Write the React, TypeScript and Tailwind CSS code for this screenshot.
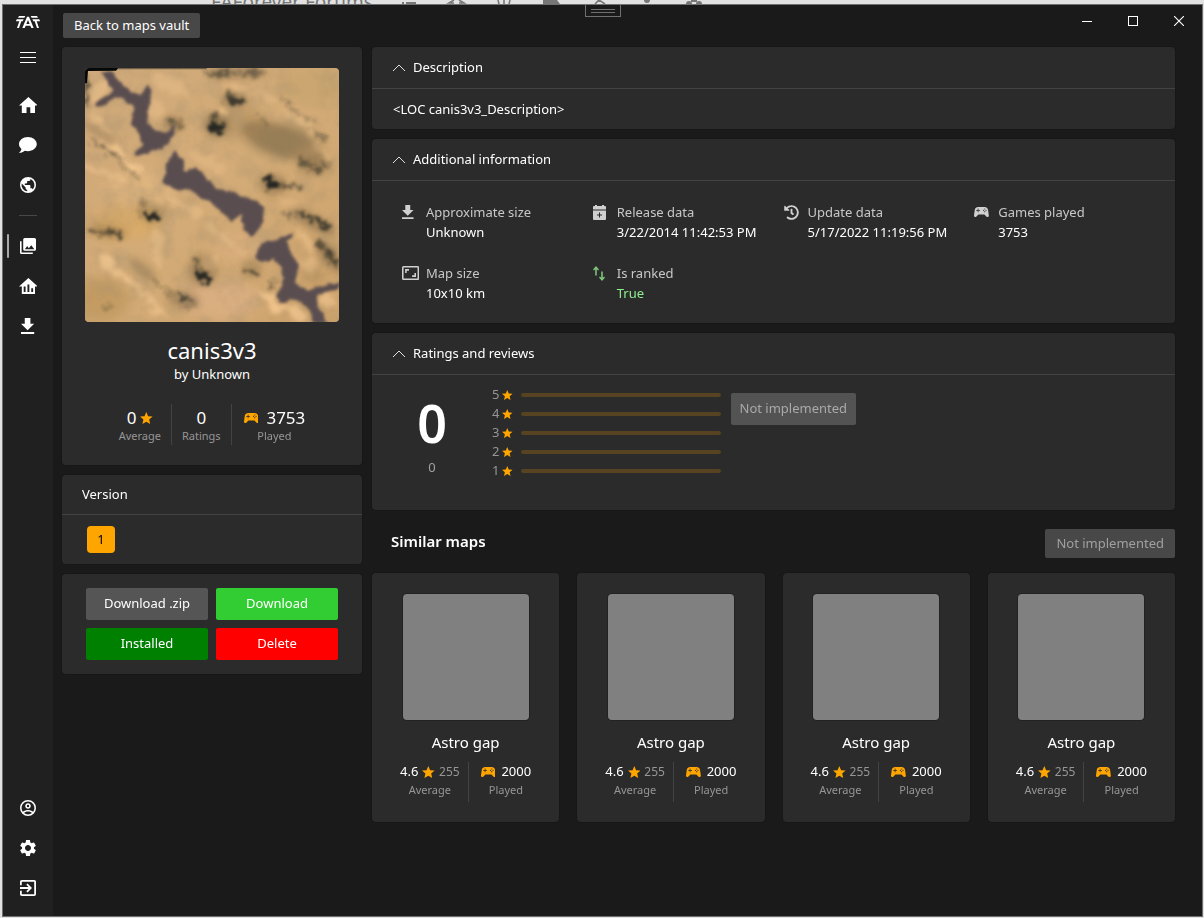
import { useState } from "react";
import type { ReactNode } from "react";
import { FaHistory } from "react-icons/fa";
import { MdSettings } from "react-icons/md";

const ICONS = {
	home: {
		box: "2 3 20 17",
		d: "M10,20V14H14V20H19V12H22L12,3L2,12H5V20H10Z",
	},
	chat: {
		box: "2 3 20 18",
		d: "M12,3C17.5,3 22,6.58 22,11C22,15.42 17.5,19 12,19C10.76,19 9.57,18.82 8.47,18.5C5.55,21 2,21 2,21C4.33,18.67 4.7,17.1 4.75,16.5C3.05,15.07 2,13.13 2,11C2,6.58 6.5,3 12,3Z",
	},
	earth: {
		box: "2 2 20 20",
		d: "M17.9,17.39C17.64,16.59 16.89,16 16,16H15V13A1,1 0 0,0 14,12H8V10H10A1,1 0 0,0 11,9V7H13A2,2 0 0,0 15,5V4.59C17.93,5.77 20,8.64 20,12C20,14.08 19.2,15.97 17.9,17.39M11,19.93C7.05,19.44 4,16.08 4,12C4,11.38 4.08,10.78 4.21,10.21L9,15V16A2,2 0 0,0 11,18M12,2A10,10 0 0,0 2,12A10,10 0 0,0 12,22A10,10 0 0,0 22,12A10,10 0 0,0 12,2Z",
	},
	images: {
		box: "2 2 20 20",
		d: "M22,16V4A2,2 0 0,0 20,2H8A2,2 0 0,0 6,4V16A2,2 0 0,0 8,18H20A2,2 0 0,0 22,16M11,12L13.03,14.71L16,11L20,16H8M2,6V20A2,2 0 0,0 4,22H18V20H4V6",
	},
	analytics: {
		box: "2 3 20 17",
		d: "M12,3L2,12H5V20H19V12H22L12,3M9,18H7V12H9V18M13,18H11V10H13V18M17,18H15V14H17V18Z",
	},
	download: {
		box: "5 3 14 17",
		d: "M5,20H19V18H5M19,9H15V3H9V9H5L12,16L19,9Z",
	},
	account: {
		box: "2 2 20 20",
		d: "M12,2A10,10 0 0,0 2,12A10,10 0 0,0 12,22A10,10 0 0,0 22,12A10,10 0 0,0 12,2M7.07,18.28C7.5,17.38 10.12,16.5 12,16.5C13.88,16.5 16.5,17.38 16.93,18.28C15.57,19.36 13.86,20 12,20C10.14,20 8.43,19.36 7.07,18.28M18.36,16.83C16.93,15.09 13.46,14.5 12,14.5C10.54,14.5 7.07,15.09 5.64,16.83C4.62,15.5 4,13.82 4,12C4,7.59 7.59,4 12,4C16.41,4 20,7.59 20,12C20,13.82 19.38,15.5 18.36,16.83M12,6C10.06,6 8.5,7.56 8.5,9.5C8.5,11.44 10.06,13 12,13C13.94,13 15.5,11.44 15.5,9.5C15.5,7.56 13.94,6 12,6M12,11A1.5,1.5 0 0,1 10.5,9.5A1.5,1.5 0 0,1 12,8A1.5,1.5 0 0,1 13.5,9.5A1.5,1.5 0 0,1 12,11Z",
	},
	exit: {
		box: "3 3 18 18",
		d: "M19,3H5C3.89,3 3,3.89 3,5V9H5V5H19V19H5V15H3V19A2,2 0 0,0 5,21H19A2,2 0 0,0 21,19V5C21,3.89 20.1,3 19,3M10.08,15.58L11.5,17L16.5,12L11.5,7L10.08,8.41L12.67,11H3V13H12.67L10.08,15.58Z",
	},
	star: {
		box: "2 2 20 19",
		d: "M12,17.27L18.18,21L16.54,13.97L22,9.24L14.81,8.62L12,2L9.19,8.62L2,9.24L7.45,13.97L5.82,21L12,17.27Z",
	},
	controller: {
		box: "2 6 20 13.5",
		d: "M7.97,16L5,19C4.67,19.3 4.23,19.5 3.75,19.5A1.75,1.75 0 0,1 2,17.75V17.5L3,10.12C3.21,7.81 5.14,6 7.5,6H16.5C18.86,6 20.79,7.81 21,10.12L22,17.5V17.75A1.75,1.75 0 0,1 20.25,19.5C19.77,19.5 19.33,19.3 19,19L16.03,16H7.97M7,8V10H5V11H7V13H8V11H10V10H8V8H7M16.5,8A0.75,0.75 0 0,0 15.75,8.75A0.75,0.75 0 0,0 16.5,9.5A0.75,0.75 0 0,0 17.25,8.75A0.75,0.75 0 0,0 16.5,8M14.75,9.75A0.75,0.75 0 0,0 14,10.5A0.75,0.75 0 0,0 14.75,11.25A0.75,0.75 0 0,0 15.5,10.5A0.75,0.75 0 0,0 14.75,9.75M18.25,9.75A0.75,0.75 0 0,0 17.5,10.5A0.75,0.75 0 0,0 18.25,11.25A0.75,0.75 0 0,0 19,10.5A0.75,0.75 0 0,0 18.25,9.75M16.5,11.5A0.75,0.75 0 0,0 15.75,12.25A0.75,0.75 0 0,0 16.5,13A0.75,0.75 0 0,0 17.25,12.25A0.75,0.75 0 0,0 16.5,11.5Z",
	},
	calendar: {
		box: "0 0 13 15",
		d: "M2,0H4V1H9V0H11V1H12A1,1 0 0,1 13,2V4.5H0V2A1,1 0 0,1 1,1H2ZM0,5.5H13V14A1,1 0 0,1 12,15H1A1,1 0 0,1 0,14ZM6,7.5V9.5H4V10.5H6V12.5H7V10.5H9V9.5H7V7.5Z",
	},
	aspect: {
		box: "1 3 22 18",
		d: "M19,12H17V15H14V17H19V12M7,9H10V7H5V12H7V9M21,3H3A2,2 0 0,0 1,5V19A2,2 0 0,0 3,21H21A2,2 0 0,0 23,19V5A2,2 0 0,0 21,3M21,19H3V5H21V19Z",
	},
	ranked: {
		box: "0 0 12 15",
		d: "M3,0L6,3.5L5,4.5L3.8,3.2V9.5H2.2V3.2L1,4.5L0,3.5ZM9,15L6,11.5L7,10.5L8.2,11.8V5.5H9.8V11.8L11,10.5L12,11.5Z",
	},
};

type IconName = keyof typeof ICONS;

function Icon({ name, className }: { name: IconName; className: string }) {
	return (
		<svg
			viewBox={ICONS[name].box}
			fill="currentColor"
			fillRule="evenodd"
			className={`shrink-0 ${className}`}
			aria-hidden="true"
		>
			<path d={ICONS[name].d} />
		</svg>
	);
}

function Logo() {
	return (
		<svg viewBox="0 0 72 36" className="h-3 w-6" fill="#fff" aria-hidden="true">
			<path d="M9 0H28L25 5H6Z M2 10H23L20 16H16L9 36H3L10 16H0Z" />
			<path d="M63 0H44L47 5H66Z M70 10H49L52 16H56L63 36H69L62 16H72Z" />
			<path d="M33 2H39L53 36H46L43 29H29L26 36H19ZM36 12L31 24H41Z" />
		</svg>
	);
}

function NavButton({
	icon,
	label,
	active = false,
}: {
	icon: IconName | "settings";
	label: string;
	active?: boolean;
}) {
	return (
		<button
			type="button"
			aria-label={label}
			className="relative flex h-10 w-full items-center justify-center text-white hover:bg-white/5"
		>
			{active && (
				<span className="absolute left-1 h-6 w-0.5 rounded bg-[#a8a8a8]" />
			)}
			{icon === "settings" ? (
				<MdSettings className="size-5" />
			) : (
				<Icon name={icon} className="h-4 w-auto" />
			)}
		</button>
	);
}

function Sidebar() {
	return (
		<nav className="flex w-[50px] shrink-0 flex-col bg-[#202020] pb-2">
			<div className="flex h-8 items-center justify-center pt-0.5">
				<Logo />
			</div>
			<button
				type="button"
				aria-label="Menu"
				className="mb-2 flex h-10 flex-col items-center justify-center gap-1"
			>
				<span className="h-px w-4 bg-white" />
				<span className="h-px w-4 bg-white" />
				<span className="h-px w-4 bg-white" />
			</button>
			<NavButton icon="home" label="Home" />
			<NavButton icon="chat" label="Chat" />
			<NavButton icon="earth" label="World" />
			<div className="mx-4 my-2.5 h-px bg-[#484848]" />
			<NavButton icon="images" label="Maps" active />
			<NavButton icon="analytics" label="Statistics" />
			<NavButton icon="download" label="Downloads" />
			<div className="flex-1" />
			<NavButton icon="account" label="Account" />
			<NavButton icon="settings" label="Settings" />
			<NavButton icon="exit" label="Exit" />
		</nav>
	);
}

function TitleBar() {
	return (
		<header className="flex h-[42px] items-start justify-between pl-2.5">
			<button
				type="button"
				className="mt-2 h-[25px] rounded-xs bg-[#484848] px-[11px] text-[13px] text-white"
			>
				Back to maps vault
			</button>
			<div className="flex text-white">
				<button
					type="button"
					aria-label="Minimize"
					className="flex h-8 w-[46px] items-center justify-center"
				>
					<span className="h-px w-2.5 bg-white" />
				</button>
				<button
					type="button"
					aria-label="Maximize"
					className="flex h-8 w-[46px] items-center justify-center"
				>
					<span className="size-2.5 border border-white" />
				</button>
				<button
					type="button"
					aria-label="Close"
					className="flex h-8 w-[46px] items-center justify-center"
				>
					<svg viewBox="0 0 10 10" className="size-2.5" aria-hidden="true">
						<path d="M0 0L10 10M10 0L0 10" stroke="#fff" strokeWidth="1.1" />
					</svg>
				</button>
			</div>
		</header>
	);
}

function Card({
	children,
	className = "",
}: {
	children: ReactNode;
	className?: string;
}) {
	return (
		<div
			className={`rounded bg-[#2b2b2b] shadow-[0_0_0_1px_#171717] ${className}`}
		>
			{children}
		</div>
	);
}

function Expander({ title, children }: { title: string; children: ReactNode }) {
	const [open, setOpen] = useState(true);

	return (
		<Card>
			<button
				type="button"
				aria-expanded={open}
				onClick={() => setOpen(!open)}
				className="flex h-[42px] w-full items-center gap-[7px] border-b border-[#434343] px-5 text-[13px] text-white"
			>
				<svg viewBox="0 0 14 8" className="h-2 w-3.5" aria-hidden="true">
					<path
						d={open ? "M1 7L7 1L13 7" : "M1 1L7 7L13 1"}
						fill="none"
						stroke="#e0e0e0"
					/>
				</svg>
				{title}
			</button>
			{open && children}
		</Card>
	);
}

// Shadowed side of each crater and rock: x, y, rx, ry, rotation, opacity
const SHADOWS = [
	[462, 122, 28, 12, 10, 0.8],
	[445, 105, 12, 8, -30, 0.5],
	[410, 203, 27, 18, 10, 1],
	[400, 168, 10, 10, 0, 0.6],
	[572, 368, 18, 26, -30, 1],
	[632, 380, 40, 6, 0, 0.55],
	[212, 468, 30, 12, 15, 1],
	[188, 430, 8, 18, 0, 0.3],
	[368, 650, 28, 14, 38, 1],
	[350, 612, 9, 20, 10, 0.5],
	[515, 635, 24, 9, 30, 0.6],
	[572, 664, 13, 5, 0, 0.5],
	[575, 680, 10, 5, 0, 0.45],
	[60, 518, 32, 6, 0, 0.6],
	[105, 520, 24, 8, 30, 0.7],
	[670, 310, 14, 14, 10, 0.5],
	[705, 325, 24, 8, 10, 0.6],
	[738, 318, 14, 8, 0, 0.5],
	[676, 468, 30, 7, 20, 0.8],
	[725, 490, 34, 10, 28, 0.75],
	[730, 565, 34, 9, 50, 0.6],
	[760, 600, 30, 10, 60, 0.6],
	[312, 712, 24, 9, 35, 0.65],
	[330, 738, 30, 3, 0, 0.4],
	[250, 680, 30, 5, 30, 0.35],
	[270, 706, 20, 4, 20, 0.35],
	[275, 185, 12, 12, 0, 0.5],
	[300, 195, 12, 10, 0, 0.35],
	[420, 42, 44, 9, 0, 0.5],
	[520, 40, 40, 9, 0, 0.4],
	[640, 145, 46, 4, 42, 0.4],
	[720, 225, 36, 5, 40, 0.4],
	[550, 180, 22, 4, 45, 0.35],
	[690, 178, 20, 3, 0, 0.35],
	[80, 270, 66, 4, 33, 0.5],
	[150, 335, 40, 4, 42, 0.45],
	[84, 742, 10, 6, 0, 0.35],
	[625, 465, 18, 7, 30, 0.4],
	[20, 90, 5, 50, 0, 0.7],
];

// Broad darker ground around the rocks
const SHADES = [
	[410, 195, 38, 34, 0, 0.4],
	[462, 118, 40, 24, 0, 0.3],
	[580, 375, 40, 34, 0, 0.3],
	[215, 455, 44, 34, 0, 0.25],
	[370, 630, 44, 48, 0, 0.3],
	[515, 625, 32, 28, 0, 0.25],
	[700, 315, 50, 26, 0, 0.3],
	[700, 485, 70, 22, 28, 0.35],
	[750, 590, 60, 26, 50, 0.35],
	[310, 720, 50, 22, 10, 0.3],
	[85, 515, 56, 20, 5, 0.3],
	[470, 38, 90, 18, 0, 0.35],
	[190, 630, 50, 20, 40, 0.25],
	[280, 190, 34, 24, 0, 0.3],
	[610, 245, 130, 46, 20, 0.3],
	[60, 220, 60, 12, 30, 0.25],
	[700, 650, 36, 22, 0, 0.15],
];

// Sunlit slopes
const HIGHLIGHTS = [
	[60, 90, 30, 30, 0, 0.5],
	[230, 150, 22, 30, 0, 0.35],
	[270, 75, 60, 26, 20, 0.35],
	[110, 275, 60, 9, 45, 0.8],
	[160, 325, 30, 9, 40, 0.8],
	[60, 190, 50, 8, 50, 0.5],
	[30, 320, 34, 14, 30, 0.5],
	[90, 345, 60, 8, 25, 0.5],
	[480, 85, 40, 10, 10, 0.5],
	[426, 155, 20, 14, 0, 0.7],
	[560, 110, 40, 8, 30, 0.4],
	[620, 160, 40, 7, 40, 0.4],
	[690, 205, 60, 9, 45, 0.45],
	[230, 425, 22, 16, 30, 0.5],
	[390, 610, 22, 20, 30, 0.6],
	[80, 600, 30, 12, 20, 0.7],
	[110, 640, 50, 10, 30, 0.6],
	[170, 680, 50, 9, 35, 0.5],
	[230, 745, 40, 14, 40, 0.6],
	[230, 560, 20, 60, 0, 0.4],
	[430, 530, 80, 12, 40, 0.35],
	[570, 720, 50, 12, 42, 0.8],
	[680, 540, 12, 40, -30, 0.5],
	[690, 610, 26, 26, 0, 0.4],
	[745, 720, 28, 24, 0, 0.6],
	[640, 755, 40, 12, 30, 0.7],
	[380, 305, 60, 16, 30, 0.3],
	[720, 270, 36, 8, 40, 0.6],
	[620, 420, 40, 10, 30, 0.3],
	[310, 440, 60, 10, 25, 0.4],
];

function Blobs({ items }: { items: number[][] }) {
	return items.map(([x, y, rx, ry, r, o]) => (
		<ellipse
			key={`${x}-${y}`}
			cx={x}
			cy={y}
			rx={rx}
			ry={ry}
			opacity={o}
			transform={`rotate(${r} ${x} ${y})`}
		/>
	));
}

function MapPreview() {
	return (
		<svg
			viewBox="15 24 762 762"
			className="aspect-square w-full rounded"
			role="img"
			aria-label="canis3v3"
		>
			<defs>
				<linearGradient id="sand" x1="0" y1="0" x2="1" y2="1">
					<stop offset="0" stopColor="#cfa97a" />
					<stop offset="0.5" stopColor="#d3ab77" />
					<stop offset="1" stopColor="#cda36c" />
				</linearGradient>
				<filter id="soft" x="-50%" y="-50%" width="200%" height="200%">
					<feGaussianBlur stdDeviation="18" />
				</filter>
				<filter id="shade" x="-20%" y="-20%" width="140%" height="140%">
					<feGaussianBlur stdDeviation="9" />
				</filter>
				<filter id="lit" x="-20%" y="-20%" width="140%" height="140%">
					<feTurbulence
						type="fractalNoise"
						baseFrequency="0.03"
						numOctaves="3"
						seed="4"
						result="n"
					/>
					<feDisplacementMap
						in="SourceGraphic"
						in2="n"
						scale="50"
						xChannelSelector="R"
						yChannelSelector="G"
					/>
					<feGaussianBlur stdDeviation="7" />
				</filter>
				<filter id="rough" x="-20%" y="-20%" width="140%" height="140%">
					<feTurbulence
						type="fractalNoise"
						baseFrequency="0.06"
						numOctaves="3"
						seed="2"
						result="n"
					/>
					<feDisplacementMap
						in="SourceGraphic"
						in2="n"
						scale="42"
						xChannelSelector="R"
						yChannelSelector="G"
					/>
					<feGaussianBlur stdDeviation="4.5" />
				</filter>
				<filter id="shore" x="-20%" y="-20%" width="140%" height="140%">
					<feTurbulence
						type="fractalNoise"
						baseFrequency="0.04"
						numOctaves="2"
						result="n"
					/>
					<feDisplacementMap
						in="SourceGraphic"
						in2="n"
						scale="16"
						xChannelSelector="R"
						yChannelSelector="G"
					/>
					<feGaussianBlur stdDeviation="5" />
				</filter>
				<filter id="dunes" x="0" y="0" width="100%" height="100%">
					<feTurbulence
						type="fractalNoise"
						baseFrequency="0.014"
						numOctaves="5"
						seed="9"
					/>
					<feColorMatrix values="0 0 0 0 0.38  0 0 0 0 0.28  0 0 0 0 0.16  2.2 0 0 0 -0.95" />
				</filter>
			</defs>
			<rect x="15" y="24" width="762" height="762" fill="url(#sand)" />
			<g filter="url(#soft)">
				<ellipse cx="600" cy="240" rx="100" ry="50" fill="#b39568" />
				<ellipse cx="490" cy="190" rx="70" ry="50" fill="#be9a68" />
				<ellipse cx="60" cy="720" rx="90" ry="70" fill="#c39b64" />
				<ellipse cx="190" cy="380" rx="120" ry="40" fill="#dfb57f" />
				<ellipse cx="420" cy="720" rx="120" ry="60" fill="#d9ae80" />
				<ellipse cx="130" cy="490" rx="110" ry="50" fill="#d9ab6b" />
				<ellipse cx="480" cy="560" rx="80" ry="40" fill="#d9ae7c" />
				<ellipse cx="700" cy="80" rx="100" ry="60" fill="#cba66f" />
			</g>
			<rect
				x="15"
				y="24"
				width="762"
				height="762"
				filter="url(#dunes)"
				opacity="0.4"
			/>
			<g filter="url(#lit)" fill="#f7ca92">
				<Blobs items={HIGHLIGHTS} />
			</g>
			<g filter="url(#shade)" fill="#5b4a33">
				<Blobs items={SHADES} />
			</g>
			<g filter="url(#rough)" fill="#262822">
				<Blobs items={SHADOWS} />
			</g>
			<g filter="url(#shore)" fill="#5a4d50">
				<path d="M60 35L95 30L115 62L150 92L180 105L205 72L218 92L205 150L202 185L225 212L262 215L285 190L278 235L245 268L215 272L175 288L160 282L190 255L180 225L153 190L160 165L163 142L130 118L105 112L75 132L45 142L42 132L100 95L85 65Z" />
				<path d="M287 270L308 300L315 332L345 320L385 358L410 385L470 403L520 418L552 440L548 492L515 534L492 505L485 462L455 484L420 452L385 422L330 392L285 387L250 367L258 318Z" />
				<path d="M590 540L640 518L622 545L632 580L657 615L645 668L680 690L730 676L780 666L780 685L740 692L708 712L718 745L745 790L698 790L690 752L650 717L600 728L588 715L612 660L605 622L580 597L545 607L526 590L545 550Z" />
			</g>
			<path d="M15 24H115L108 32L24 33L21 70H15Z" fill="#050807" />
			<path d="M115 24H380V28H112Z" fill="#4b4234" opacity="0.7" />
		</svg>
	);
}

function Stat({ value, label }: { value: ReactNode; label: string }) {
	return (
		<div className="flex flex-col items-center">
			<div className="flex h-5 items-center gap-1 text-white">{value}</div>
			<div className="text-[11px] leading-4 text-[#969696]">{label}</div>
		</div>
	);
}

function MapCard() {
	return (
		<Card className="px-[23px] pt-[21px] pb-5 text-center text-white">
			<MapPreview />
			<h1 className="mt-3 text-[22px] leading-8">canis3v3</h1>
			<p className="text-[13px] leading-4">by Unknown</p>
			<div className="mt-[22px] flex h-[41px] justify-center divide-x divide-[#434343] text-[17px]">
				<div className="pt-1 pr-2.5">
					<Stat
						label="Average"
						value={
							<>
								0 <Icon name="star" className="h-3 w-auto text-[#ffa500]" />
							</>
						}
					/>
				</div>
				<div className="px-2.5 pt-1">
					<Stat label="Ratings" value="0" />
				</div>
				<div className="pt-1 pl-3">
					<Stat
						label="Played"
						value={
							<>
								<Icon
									name="controller"
									className="mr-1 h-2.5 w-auto text-[#ffa500]"
								/>
								3753
							</>
						}
					/>
				</div>
			</div>
		</Card>
	);
}

function VersionCard() {
	return (
		<Card>
			<h2 className="flex h-10 items-center border-b border-[#434343] px-5 text-[13px] text-white">
				Version
			</h2>
			<div className="px-[25px] py-[11px]">
				<button
					type="button"
					className="block h-[27px] w-7 rounded bg-[#ffa500] text-[13px] text-black"
				>
					1
				</button>
			</div>
		</Card>
	);
}

const ACTIONS = [
	{ label: "Download .zip", color: "bg-[#555555]" },
	{ label: "Download", color: "bg-[#32cd32]" },
	{ label: "Installed", color: "bg-[#008000]" },
	{ label: "Delete", color: "bg-[#ff0000]" },
];

function ActionsCard() {
	return (
		<Card className="grid grid-cols-2 gap-2 px-6 py-3.5">
			{ACTIONS.map((action) => (
				<button
					type="button"
					key={action.label}
					className={`h-8 rounded-xs text-[13px] text-white ${action.color}`}
				>
					{action.label}
				</button>
			))}
		</Card>
	);
}

function InfoItem({
	icon,
	label,
	value,
	valueColor = "text-white",
}: {
	icon: ReactNode;
	label: string;
	value: string;
	valueColor?: string;
}) {
	return (
		<div className="flex text-[13px] leading-5">
			<div className="flex h-5 w-[34px] shrink-0 items-center pl-2.5 text-[#d0d0d0]">
				{icon}
			</div>
			<div className="whitespace-nowrap">
				<div className="text-[#c8c8c8]">{label}</div>
				<div className={valueColor}>{value}</div>
			</div>
		</div>
	);
}

function AdditionalInfo() {
	return (
		<div className="grid grid-cols-4 gap-y-[21px] px-5 pt-[21px] pb-5">
			<InfoItem
				icon={<Icon name="download" className="h-3.5 w-auto" />}
				label="Approximate size"
				value="Unknown"
			/>
			<InfoItem
				icon={<Icon name="calendar" className="h-[15px] w-auto" />}
				label="Release data"
				value="3/22/2014 11:42:53 PM"
			/>
			<InfoItem
				icon={<FaHistory className="size-[15px]" />}
				label="Update data"
				value="5/17/2022 11:19:56 PM"
			/>
			<InfoItem
				icon={<Icon name="controller" className="h-2.5 w-auto" />}
				label="Games played"
				value="3753"
			/>
			<InfoItem
				icon={<Icon name="aspect" className="h-3.5 w-auto" />}
				label="Map size"
				value="10x10 km"
			/>
			<InfoItem
				icon={
					<Icon name="ranked" className="h-[15px] w-auto text-[#7cc47c]" />
				}
				label="Is ranked"
				value="True"
				valueColor="text-[#90ee90]"
			/>
		</div>
	);
}

function Ratings() {
	return (
		<div className="flex h-[135px] items-start px-5">
			<div className="flex w-20 flex-col items-center pt-4">
				<div className="text-[52px] leading-[64px] font-semibold text-white">
					0
				</div>
				<div className="mt-0.5 text-[13px] leading-5 text-[#a0a0a0]">0</div>
			</div>
			<div className="ml-5 pt-2.5">
				{[5, 4, 3, 2, 1].map((stars) => (
					<div
						key={stars}
						className="flex h-[19px] items-center text-[13px] text-[#969696]"
					>
						<span className="w-2.5">{stars}</span>
						<Icon name="star" className="h-2.5 w-auto text-[#ffa500]" />
						<span className="ml-2 h-1 w-[200px] rounded-full bg-[#574322]" />
					</div>
				))}
			</div>
			<button
				type="button"
				disabled
				className="mt-[18px] ml-2.5 h-8 rounded-xs bg-[#535353] px-[9px] text-[13px] text-[#a9a9a9]"
			>
				Not implemented
			</button>
		</div>
	);
}

function SimilarMap({ name }: { name: string }) {
	return (
		<Card className="flex flex-col items-center pt-[21px] pb-5 text-white">
			<div className="size-[126px] rounded bg-[#808080] shadow-[0_0_0_1px_#222]" />
			<h3 className="mt-2.5 text-[15px] leading-6">{name}</h3>
			<div className="mt-2 flex h-10 divide-x divide-[#434343] text-[13px]">
				<div className="pr-2">
					<Stat
						label="Average"
						value={
							<>
								4.6
								<Icon name="star" className="h-3 w-auto text-[#ffa500]" />
								<span className="text-xs text-[#969696]">255</span>
							</>
						}
					/>
				</div>
				<div className="pl-3">
					<Stat
						label="Played"
						value={
							<>
								<Icon
									name="controller"
									className="mr-0.5 h-2.5 w-auto text-[#ffa500]"
								/>
								2000
							</>
						}
					/>
				</div>
			</div>
		</Card>
	);
}

const SIMILAR_MAPS = [
	{ id: 1, name: "Astro gap" },
	{ id: 2, name: "Astro gap" },
	{ id: 3, name: "Astro gap" },
	{ id: 4, name: "Astro gap" },
];

export default function App() {
	return (
		<div className="flex min-h-screen flex-col bg-[#e2e2e2] pr-px pb-px pl-0.5 font-['Noto_Sans',sans-serif]">
			{/* Page behind the window */}
			<div className="flex h-1 items-start overflow-hidden text-[19px] leading-1 text-[#777777]">
				<span className="ml-[209px] w-[189px] whitespace-nowrap">
					FAForever Forums
				</span>
				<svg viewBox="0 0 304 4" className="h-1 w-[304px]" aria-hidden="true">
					<g fill="#777777">
						<path d="M2 2H4V4H2ZM6 2H16V4H6Z" />
						<path d="M143 0H157L160 4H143Z" />
						<circle cx="247" cy="0" r="3" />
						<path d="M286 4A3 3 0 0 1 292 4ZM291 0H297V2H291ZM296 4A3 3 0 0 1 302 4Z" />
					</g>
					<g fill="none" stroke="#777777" strokeWidth="1.6">
						<path d="M54 0L49 3H54M59 0L64 3H59M98 0L99 4M104 0V4M110 0L109 4M195 4L199 0L205 4" />
					</g>
				</svg>
			</div>

			<div className="relative flex flex-1 border border-[#707070] bg-[#1a1a1a]">
				<div className="absolute -top-px left-1/2 flex h-[13px] w-9 -translate-x-1/2 flex-col items-center justify-center gap-0.5 border border-[#707070]">
					<span className="h-px w-6 bg-[#707070]" />
					<span className="h-px w-6 bg-[#707070]" />
				</div>

				<Sidebar />

				<div className="min-w-0 flex-1">
					<TitleBar />
					<main className="flex items-start gap-2.5 pr-[27px] pl-[9px]">
						<aside className="flex w-[300px] shrink-0 flex-col gap-2.5">
							<MapCard />
							<VersionCard />
							<ActionsCard />
						</aside>

						<div className="flex min-w-0 flex-1 flex-col gap-2.5">
							<Expander title="Description">
								<p className="px-[21px] py-2.5 text-[13px] leading-5 text-white">
									{"<LOC canis3v3_Description>"}
								</p>
							</Expander>
							<Expander title="Additional information">
								<AdditionalInfo />
							</Expander>
							<Expander title="Ratings and reviews">
								<Ratings />
							</Expander>

							<section>
								<div className="flex items-start justify-between pt-[9px] pb-[15px] pl-[19px]">
									<h2 className="text-[15px] leading-6 font-semibold text-white">
										Similar maps
									</h2>
									<button
										type="button"
										disabled
										className="h-[29px] rounded-xs bg-[#484848] px-[11px] text-[13px] text-[#a0a0a0]"
									>
										Not implemented
									</button>
								</div>
								<div className="grid grid-cols-4 gap-[18px]">
									{SIMILAR_MAPS.map((map) => (
										<SimilarMap key={map.id} name={map.name} />
									))}
								</div>
							</section>
						</div>
					</main>
				</div>
			</div>
		</div>
	);
}
